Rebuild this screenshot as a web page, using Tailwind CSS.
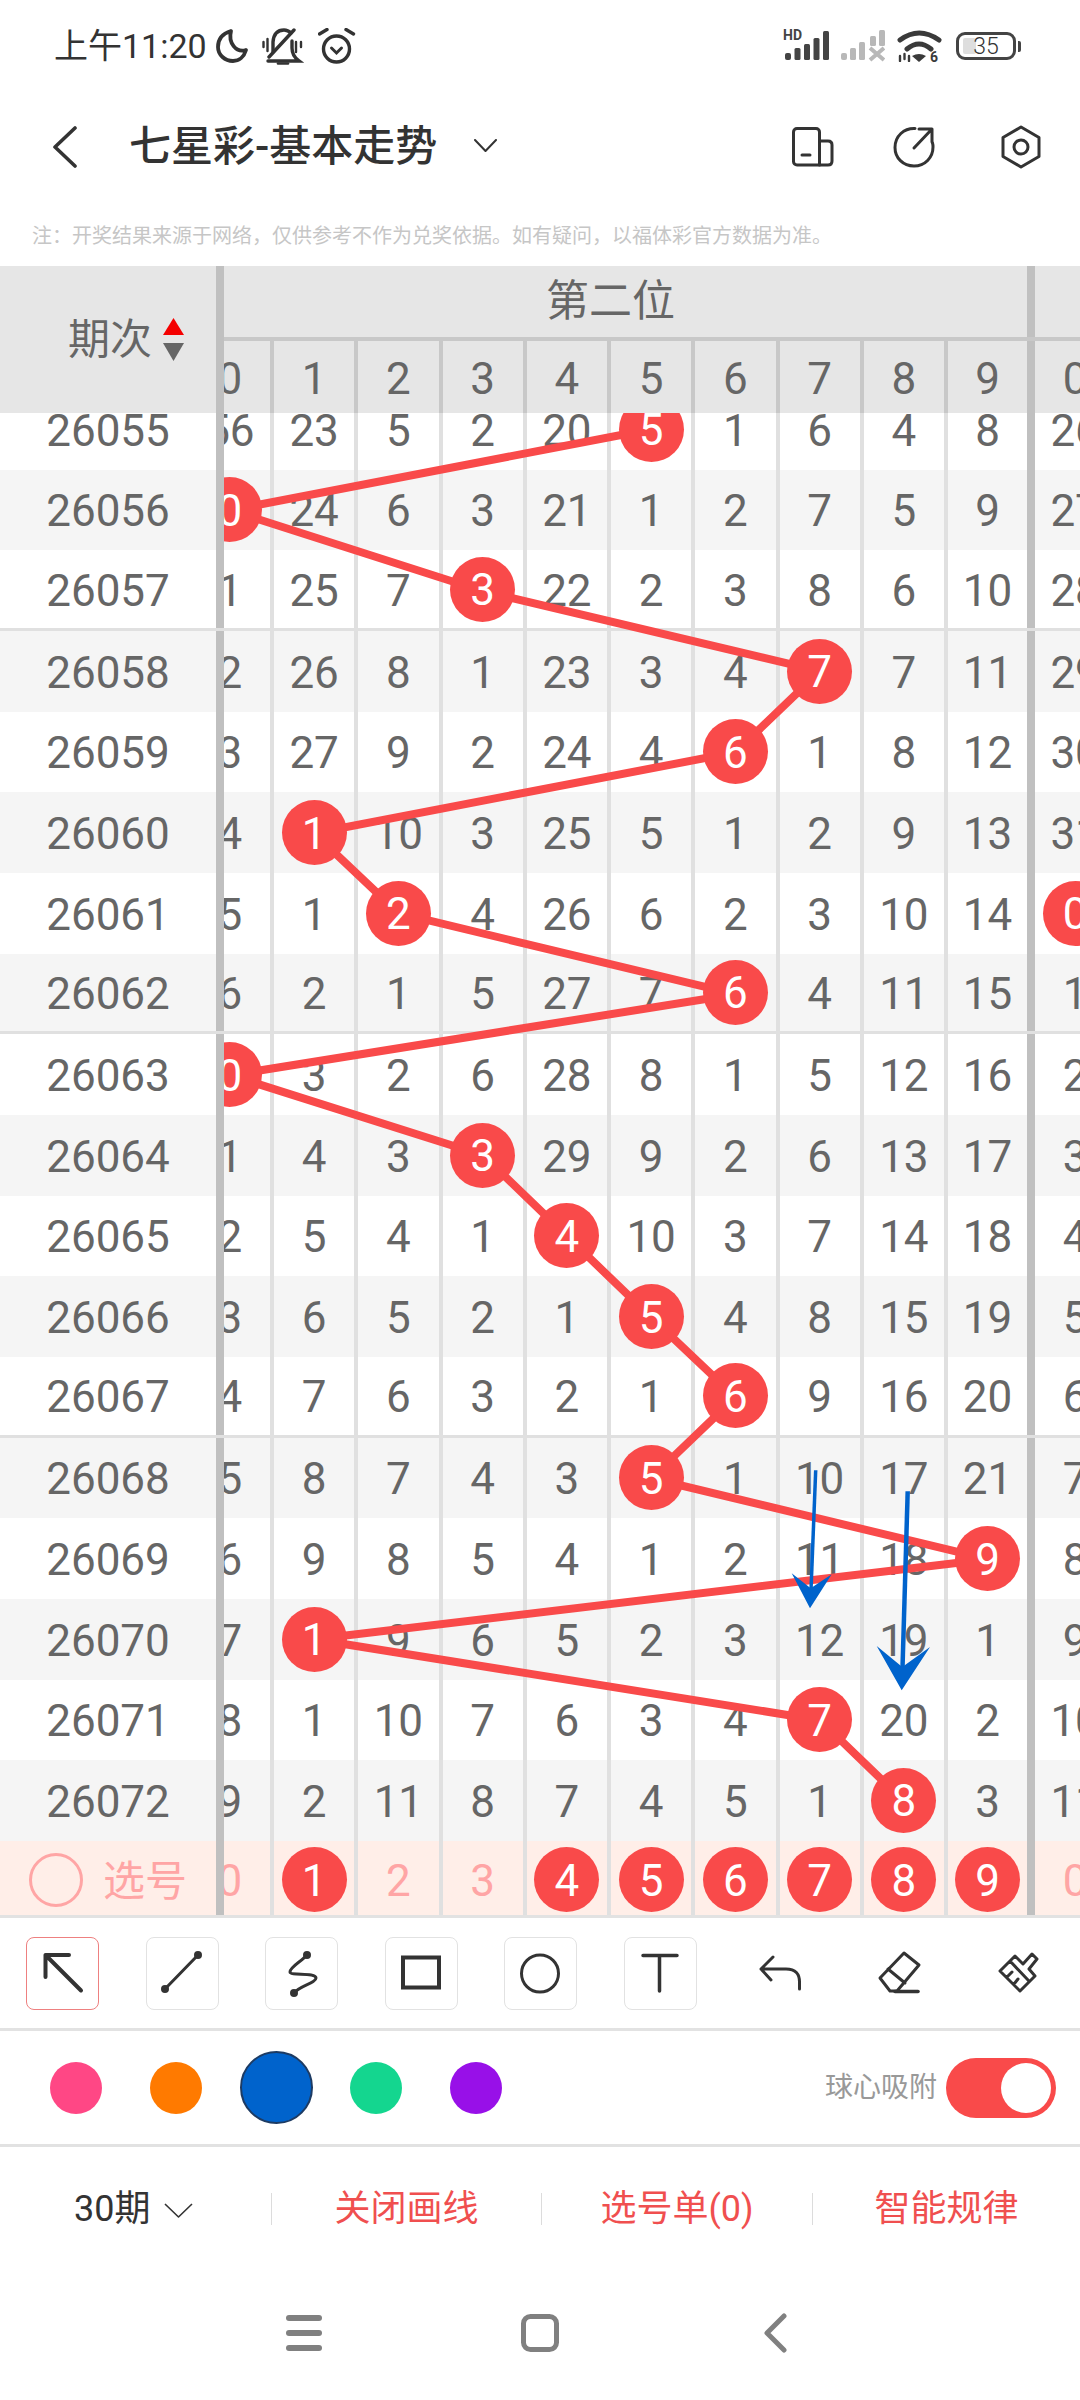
<!DOCTYPE html>
<html lang="zh">
<head>
<meta charset="utf-8">
<script src="https://cdn.jsdelivr.net/npm/@tailwindcss/browser@4"></script>
<title>七星彩-基本走势</title>
</head>
<body class="m-0 bg-white">
<div class="relative h-[2400px] w-[1080px] overflow-hidden bg-white font-['Roboto','Noto_Sans_CJK_SC',sans-serif] text-[#333]">

  <!-- status bar -->
  <div class="flex h-[92px] items-center pl-[54px] pr-[59px]">
    <span class="text-[34px] leading-none text-[#333]">上午11:20</span>
    <svg class="ml-[9px]" width="33" height="34" viewBox="0 0 33 34" fill="none" stroke="#333" stroke-width="3.800" stroke-linejoin="round"><path d="M15 2C5 5 2 12 2 18c0 8 7 14 15 14 6 0 11-4 13-11-10 3-18-7-15-19Z"/></svg>
    <svg class="ml-[12px]" width="44" height="37" viewBox="0 0 44 37" fill="none" stroke="#333" stroke-width="3.400" stroke-linecap="round"><path d="M12 24V14Q13 2 23 2q4 0 7 3M31 13v7q0 8 7 13H7"/><path d="M17 35.500h10" stroke-width="2.600"/><path d="M33 2 8 29"/><path d="M2.500 14v5M6.500 11v12M35 14v10M40 14v5" stroke-width="2.400"/></svg>
    <svg class="ml-[13px]" width="38" height="36" viewBox="0 0 38 36" fill="none" stroke="#333" stroke-width="3.400" stroke-linecap="round"><circle cx="18.500" cy="21" r="13"/><path d="M1.500 6 9 1.500M28 1.500 35.500 6"/><path d="M13.500 20l5 5 5-5" stroke-width="3"/></svg>
    <div class="ml-auto flex items-center">
      <div class="relative h-[32px] w-[46px]">
        <span class="absolute left-0 top-[-1px] text-[14px] font-bold leading-[13px] text-[#444]">HD</span>
        <svg class="absolute inset-0" width="46" height="32" viewBox="0 0 46 32" fill="#444"><rect x="2" y="23" width="6" height="7" rx="2"/><rect x="11.500" y="18" width="6" height="12" rx="1.500"/><rect x="21" y="14" width="6" height="16" rx="1.500"/><rect x="30.500" y="8" width="6" height="22" rx="1.500"/><rect x="40" y="1" width="6" height="29" rx="1.500"/></svg>
      </div>
      <svg class="ml-[12px]" width="44" height="32" viewBox="0 0 44 32" fill="#b8b8b8"><rect x="0" y="23" width="6" height="7" rx="2"/><rect x="9" y="18" width="6" height="12" rx="1.500"/><rect x="18" y="12" width="6" height="18" rx="1.500"/><rect x="29" y="6" width="6" height="10" rx="1.500"/><rect x="38" y="0" width="6" height="16" rx="1.500"/><path d="M29 18 43 30M43 18 29 30" stroke="#b8b8b8" stroke-width="4" fill="none"/></svg>
      <svg class="ml-[12px]" width="46" height="32" viewBox="0 0 46 32" fill="none" stroke="#3a3a3a" stroke-width="5" stroke-linecap="round"><path d="M3 10Q22-4 42 10M10 19Q22 9 34 19"/><path d="M15 26Q22 22 29 26L22 32Z" fill="#3a3a3a" stroke="none"/><path d="M3 26v5M7.500 24v5M12 26v5" stroke-width="2.400"/><text x="33" y="32" font-size="14" font-weight="700" fill="#3a3a3a" stroke="none">6</text></svg>
      <div class="relative ml-[13px] flex h-[28px] w-[60px] items-center justify-center rounded-[9px] border-[3px] border-[#444]">
        <div class="absolute bottom-[3px] left-[4px] top-[3px] w-[13px] rounded-[2px] bg-[#dedede]"></div>
        <span class="relative text-[23px] font-light leading-none text-[#333]">35</span>
      </div>
      <div class="ml-[2px] h-[11px] w-[3px] rounded-r-[2px] bg-[#444]"></div>
    </div>
  </div>

  <!-- title bar -->
  <div class="flex h-[110px] items-center pl-[52px]">
    <svg width="25" height="42" viewBox="0 0 25 42" fill="none" stroke="#333" stroke-width="3.600" stroke-linecap="round" stroke-linejoin="round"><path d="M23 2 3 21l20 19"/></svg>
    <span class="ml-[52px] text-[42px] font-medium leading-none text-[#333]">七星彩-基本走势</span>
    <svg class="ml-[37px] mt-[-4px]" width="23" height="13" viewBox="0 0 23 13" fill="none" stroke="#333" stroke-width="2" stroke-linecap="round" stroke-linejoin="round"><path d="M1 1l10.500 11L22 1"/></svg>
    <svg class="ml-[295px]" width="42" height="40" viewBox="0 0 42 40" fill="none" stroke="#333" stroke-width="3" stroke-linejoin="round" stroke-linecap="round"><path d="M5 1.500h19c2 0 3.500 1.500 3.500 3.500v33H5c-2 0-3.500-1.500-3.500-3.500V5C1.500 3 3 1.500 5 1.500Z"/><path d="M27.500 14H36c2.500 0 4 1.500 4 4v16c0 2.500-1.500 4-4 4h-8.500"/><path d="M10 28h8"/></svg>
    <svg class="ml-[59px]" width="42" height="42" viewBox="0 0 42 42" fill="none" stroke="#333" stroke-width="3" stroke-linecap="round" stroke-linejoin="round"><path d="M22 2.500C11 2 2 10 2 21.500 2 32 10 40 21 40c11 0 19-8.500 19-19 0-1.500-.2-3-.5-4"/><path d="M21 22 39 3M26 3h13v13"/></svg>
    <svg class="ml-[65px]" width="42" height="44" viewBox="0 0 42 44" fill="none" stroke="#333" stroke-width="3" stroke-linejoin="round"><path d="M21 2 39 12.500v19L21 42 3 31.500v-19Z"/><circle cx="21" cy="22" r="7"/></svg>
  </div>

  <!-- note -->
  <div class="flex h-[64px] items-center pl-[32px] pt-[4px] text-[20px] leading-none text-[#c6c6c6]">注：开奖结果来源于网络，仅供参考不作为兑奖依据。如有疑问，以福体彩官方数据为准。</div>

  <!-- table header -->
  <div class="relative z-40 flex h-[147px] bg-[#e6e6e6] text-[#666]">
    <div class="relative z-10 flex w-[224px] shrink-0 items-center border-r-8 border-[#c0c0c0] bg-[#e6e6e6] pl-[68px]">
      <span class="text-[42px] leading-none">期次</span>
      <div class="ml-[11px] flex flex-col gap-[8px]">
        <svg width="21" height="17" viewBox="0 0 21 17"><path d="M10.500 0 21 17H0Z" fill="#f40000"/></svg>
        <svg width="21" height="18" viewBox="0 0 21 18"><path d="M0 0h21L10.500 18Z" fill="#666"/></svg>
      </div>
    </div>
    <div class="flex min-w-0 flex-1 flex-col overflow-hidden">
      <div class="flex h-[75px] shrink-0 border-b-4 border-[#c8c8c8]">
        <div class="flex w-[803px] shrink-0 items-center justify-center pr-[30px] text-[43px] leading-none">第二位</div>
        <div class="w-[8px] shrink-0 bg-[#c0c0c0]"></div>
      </div>
      <div class="flex flex-1 text-[44px] leading-none [&>span]:flex [&>span]:w-[84.25px] [&>span]:shrink-0 [&>span]:items-center [&>span]:justify-center [&>span]:border-r-4 [&>span]:border-[#c8c8c8] [&>span]:pt-[3px] [&>span:nth-child(1)]:-ml-[34.25px] [&>span:nth-child(10)]:w-[87px] [&>span:nth-child(10)]:border-r-8 [&>span:nth-child(10)]:border-[#c0c0c0]">
        <span>0</span><span>1</span><span>2</span><span>3</span><span>4</span><span>5</span><span>6</span><span>7</span><span>8</span><span>9</span><span>0</span>
      </div>
    </div>
  </div>

  <!-- table body -->
  <div class="relative h-[1502px] overflow-hidden text-[44px] leading-none text-[#666] [&>div]:flex [&>div]:h-[80.67px] [&>div>div]:relative [&>div>div]:z-30 [&>div>div]:flex [&>div>div]:w-[224px] [&>div>div]:shrink-0 [&>div>div]:items-center [&>div>div]:justify-center [&>div>div]:border-r-8 [&>div>div]:border-[#c0c0c0] [&>div>div]:bg-inherit [&>div>div]:pt-[3px] [&>div>span]:flex [&>div>span]:w-[84.25px] [&>div>span]:shrink-0 [&>div>span]:items-center [&>div>span]:justify-center [&>div>span]:border-r-4 [&>div>span]:border-[#e0e0e0] [&>div>span]:pt-[3px] [&>div>span:nth-child(2)]:-ml-[34.25px] [&>div>span:nth-child(11)]:w-[87px] [&>div>span:nth-child(11)]:border-r-8 [&>div>span:nth-child(11)]:border-[#c0c0c0] [&_i]:relative [&_i]:z-20 [&_i]:-mt-[3px] [&_i]:flex [&_i]:size-[65px] [&_i]:shrink-0 [&_i]:items-center [&_i]:justify-center [&_i]:rounded-full [&_i]:bg-[#f94a4a] [&_i]:pt-[2px] [&_i]:not-italic [&_i]:text-white">
    <svg class="absolute left-0 top-0 z-10" width="1080" height="1502" viewBox="0 411.800 1080 1502" fill="none">
      <polyline stroke="#f94a4a" stroke-width="8" points="651,428 230,509 483,590 820,670 735.500,751 314,832 398.500,912 735.500,993 230,1074 483,1154 567,1235 651,1316 735.500,1396 651,1477 988,1558 314,1638 820,1719 904,1800"/>
      <path d="M815.700 1469 811 1589" stroke="#0063cc" stroke-width="3.500"/>
      <path d="M791.700 1572 810.700 1587 831.700 1573 810 1607Z" fill="#0063cc"/>
      <path d="M907.700 1490 902.500 1667" stroke="#0063cc" stroke-width="4.500"/>
      <path d="M876.700 1644.700 902.300 1665.700 930 1645.700 901.700 1689Z" fill="#0063cc"/>
    </svg>
    <div class="-mt-[24px] bg-white"><div>26055</div><span>56</span><span>23</span><span>5</span><span>2</span><span>20</span><span><i>5</i></span><span>1</span><span>6</span><span>4</span><span>8</span><span>26</span></div>
    <div class="bg-[#f5f5f5]"><div>26056</div><span><i>0</i></span><span>24</span><span>6</span><span>3</span><span>21</span><span>1</span><span>2</span><span>7</span><span>5</span><span>9</span><span>27</span></div>
    <div class="border-b-[3px] border-[#e0e0e0] bg-white"><div>26057</div><span>1</span><span>25</span><span>7</span><span><i>3</i></span><span>22</span><span>2</span><span>3</span><span>8</span><span>6</span><span>10</span><span>28</span></div>
    <div class="bg-[#f5f5f5]"><div>26058</div><span>2</span><span>26</span><span>8</span><span>1</span><span>23</span><span>3</span><span>4</span><span><i>7</i></span><span>7</span><span>11</span><span>29</span></div>
    <div class="bg-white"><div>26059</div><span>3</span><span>27</span><span>9</span><span>2</span><span>24</span><span>4</span><span><i>6</i></span><span>1</span><span>8</span><span>12</span><span>30</span></div>
    <div class="bg-[#f5f5f5]"><div>26060</div><span>4</span><span><i>1</i></span><span>10</span><span>3</span><span>25</span><span>5</span><span>1</span><span>2</span><span>9</span><span>13</span><span>31</span></div>
    <div class="bg-white"><div>26061</div><span>5</span><span>1</span><span><i>2</i></span><span>4</span><span>26</span><span>6</span><span>2</span><span>3</span><span>10</span><span>14</span><span><i>0</i></span></div>
    <div class="border-b-[3px] border-[#e0e0e0] bg-[#f5f5f5]"><div>26062</div><span>6</span><span>2</span><span>1</span><span>5</span><span>27</span><span>7</span><span><i>6</i></span><span>4</span><span>11</span><span>15</span><span>1</span></div>
    <div class="bg-white"><div>26063</div><span><i>0</i></span><span>3</span><span>2</span><span>6</span><span>28</span><span>8</span><span>1</span><span>5</span><span>12</span><span>16</span><span>2</span></div>
    <div class="bg-[#f5f5f5]"><div>26064</div><span>1</span><span>4</span><span>3</span><span><i>3</i></span><span>29</span><span>9</span><span>2</span><span>6</span><span>13</span><span>17</span><span>3</span></div>
    <div class="bg-white"><div>26065</div><span>2</span><span>5</span><span>4</span><span>1</span><span><i>4</i></span><span>10</span><span>3</span><span>7</span><span>14</span><span>18</span><span>4</span></div>
    <div class="bg-[#f5f5f5]"><div>26066</div><span>3</span><span>6</span><span>5</span><span>2</span><span>1</span><span><i>5</i></span><span>4</span><span>8</span><span>15</span><span>19</span><span>5</span></div>
    <div class="border-b-[3px] border-[#e0e0e0] bg-white"><div>26067</div><span>4</span><span>7</span><span>6</span><span>3</span><span>2</span><span>1</span><span><i>6</i></span><span>9</span><span>16</span><span>20</span><span>6</span></div>
    <div class="bg-[#f5f5f5]"><div>26068</div><span>5</span><span>8</span><span>7</span><span>4</span><span>3</span><span><i>5</i></span><span>1</span><span>10</span><span>17</span><span>21</span><span>7</span></div>
    <div class="bg-white"><div>26069</div><span>6</span><span>9</span><span>8</span><span>5</span><span>4</span><span>1</span><span>2</span><span>11</span><span>18</span><span><i>9</i></span><span>8</span></div>
    <div class="bg-[#f5f5f5]"><div>26070</div><span>7</span><span><i>1</i></span><span>9</span><span>6</span><span>5</span><span>2</span><span>3</span><span>12</span><span>19</span><span>1</span><span>9</span></div>
    <div class="bg-white"><div>26071</div><span>8</span><span>1</span><span>10</span><span>7</span><span>6</span><span>3</span><span>4</span><span><i>7</i></span><span>20</span><span>2</span><span>10</span></div>
    <div class="bg-[#f5f5f5]"><div>26072</div><span>9</span><span>2</span><span>11</span><span>8</span><span>7</span><span>4</span><span>5</span><span>1</span><span><i>8</i></span><span>3</span><span>11</span></div>
    <!-- pick row -->
    <div class="!h-[73.800px] bg-[#ffeee8] text-[#ffa5a5] [&>span]:!pt-[7px]">
      <div class="!justify-start !pt-[4px] pl-[29px]"><b class="size-[54px] shrink-0 rounded-full border-[3px] border-[#ffa5a5]"></b><b class="ml-[20px] mt-[4px] text-[42px] font-normal">选号</b></div>
      <span>0</span><span><i>1</i></span><span>2</span><span>3</span><span><i>4</i></span><span><i>5</i></span><span><i>6</i></span><span><i>7</i></span><span><i>8</i></span><span><i>9</i></span><span>0</span>
    </div>
  </div>

  <!-- drawing tools -->
  <div class="flex h-[116px] items-center border-y-[3px] border-y-[#e2e2e2] pl-[2.700px] [&>div]:flex [&>div]:w-[119.600px] [&>div]:justify-center [&_svg]:block">
    <div><div class="size-[73px] rounded-[8px] border border-[#ee8080]"><svg class="-m-px" width="73" height="73" viewBox="0 0 73 73" fill="none" stroke="#333" stroke-width="4" stroke-linecap="round" stroke-linejoin="round"><path d="M43 18H19.500v22M19.500 18 55 53.500"/></svg></div></div>
    <div><div class="size-[73px] rounded-[8px] border border-[#e2e2e2]"><svg class="-m-px" width="73" height="73" viewBox="0 0 73 73" fill="none" stroke="#333" stroke-width="3" stroke-linecap="round"><path d="M52 18 19 52"/><circle cx="52" cy="18" r="2.500" fill="#333"/><circle cx="19" cy="52" r="2.500" fill="#333"/></svg></div></div>
    <div><div class="size-[73px] rounded-[8px] border border-[#e2e2e2]"><svg class="-m-px" width="73" height="73" viewBox="0 0 73 73" fill="none" stroke="#333" stroke-width="3" stroke-linecap="round"><path d="M42 18C37 24 25 30 25 35c0 4 26 0 26 6 0 5-17 8-22 15"/><circle cx="42" cy="18" r="2.500" fill="#333"/><circle cx="29" cy="56" r="2.500" fill="#333"/></svg></div></div>
    <div><div class="size-[73px] rounded-[8px] border border-[#e2e2e2]"><svg class="-m-px" width="73" height="73" viewBox="0 0 73 73" fill="none" stroke="#333" stroke-width="4"><rect x="18" y="20.500" width="36" height="30"/></svg></div></div>
    <div><div class="size-[73px] rounded-[8px] border border-[#e2e2e2]"><svg class="-m-px" width="73" height="73" viewBox="0 0 73 73" fill="none" stroke="#333" stroke-width="3"><circle cx="36" cy="36.500" r="18.500"/></svg></div></div>
    <div><div class="size-[73px] rounded-[8px] border border-[#e2e2e2]"><svg class="-m-px" width="73" height="73" viewBox="0 0 73 73" fill="none" stroke="#333" stroke-width="3.500" stroke-linecap="round"><path d="M19 18.500h34M35.500 18.500V54"/></svg></div></div>
    <div><svg width="73" height="73" viewBox="744 1936 73 73" fill="none" stroke="#333" stroke-width="3" stroke-linecap="round" stroke-linejoin="round"><path d="M773 1956 761 1968l10 11M761 1968h25q14 0 13.500 14v6"/></svg></div>
    <div><svg width="73" height="73" viewBox="863 1936 73 73" fill="none" stroke="#333" stroke-width="3" stroke-linecap="round" stroke-linejoin="round"><path d="M904 1952l15 12-22 26-7 0-10-13ZM888 1968l17 14"/><path d="M895 1990.500h23" stroke-width="3.600"/></svg></div>
    <div><svg width="73" height="73" viewBox="983 1936 73 73" fill="none" stroke="#333" stroke-width="3" stroke-linecap="round" stroke-linejoin="round"><path d="M1015 1955 1023 1963 1032 1953 1037 1958 1029 1968 1035 1975 1020 1990 1000 1970ZM1010 1960 1028 1979M1007 1976l5-5M1014 1983l4-5"/></svg></div>
  </div>

  <!-- colors -->
  <div class="relative flex h-[116px] items-center border-b-[3px] border-[#e2e2e2]">
    <div class="ml-[50px] size-[52px] rounded-full bg-[#ff4785]"></div>
    <div class="ml-[48px] size-[52px] rounded-full bg-[#ff7a00]"></div>
    <div class="ml-[38px] size-[73px] rounded-full border-2 border-[#1d3b63] bg-[#0063cc]"></div>
    <div class="ml-[37px] size-[52px] rounded-full bg-[#14d68f]"></div>
    <div class="ml-[48px] size-[52px] rounded-full bg-[#9810e8]"></div>
    <span class="ml-auto text-[28px] leading-none text-[#999]">球心吸附</span>
    <div class="ml-[9px] mr-[24px] flex h-[60px] w-[110px] items-center justify-end rounded-full bg-[#f94a4a] pr-[5px]"><div class="size-[50px] rounded-full bg-white"></div></div>
  </div>

  <!-- bottom actions -->
  <div class="flex h-[124px] items-center text-[36px] leading-none text-[#f04f4f] [&>div]:flex [&>div]:h-[32px] [&>div]:items-center [&>div]:justify-center [&>div+div]:border-l [&>div+div]:border-[#dcdcdc]">
    <div class="w-[271px] !justify-start pl-[74px] text-[#333]"><span>30期</span><svg class="ml-[14px] mt-[2px]" width="29" height="15" viewBox="0 0 29 15" fill="none" stroke="#333" stroke-width="1.600" stroke-linejoin="round"><path d="M1 1l13.500 13L28 1"/></svg></div>
    <div class="w-[270px]">关闭画线</div>
    <div class="w-[271px]">选号单(0)</div>
    <div class="w-[268px]">智能规律</div>
  </div>

  <!-- system nav -->
  <div class="flex h-[124px] items-center">
    <svg class="ml-[286px]" width="36" height="36" viewBox="0 0 36 36" fill="#808080"><rect x="0" y="0" width="36" height="6" rx="3"/><rect x="0" y="15" width="36" height="6" rx="3"/><rect x="0" y="30" width="36" height="6" rx="3"/></svg>
    <svg class="ml-[199px]" width="38" height="38" viewBox="0 0 38 38" fill="none" stroke="#808080" stroke-width="5"><rect x="2.500" y="2.500" width="33" height="33" rx="7"/></svg>
    <svg class="ml-[204px]" width="24" height="40" viewBox="0 0 24 40" fill="none" stroke="#808080" stroke-width="5" stroke-linecap="round" stroke-linejoin="round"><path d="M21 3 4 20l17 17"/></svg>
  </div>
</div>
</body>
</html>
